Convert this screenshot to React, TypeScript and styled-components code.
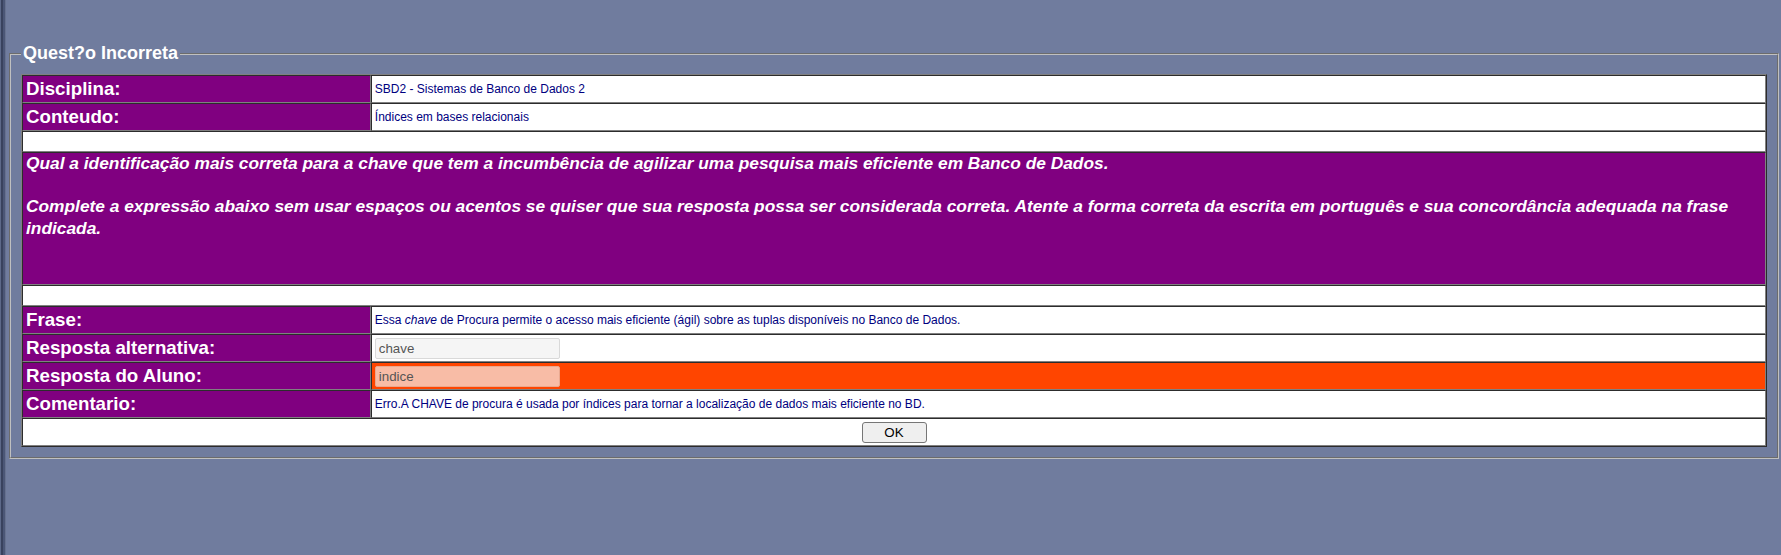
import React from "react";
import styled, { createGlobalStyle } from "styled-components";

const GlobalStyle = createGlobalStyle`
  html, body {
    margin: 0;
    padding: 0;
    background: #707c9e;
  }
  body {
    font-family: "Liberation Sans", Arial, sans-serif;
  }
`;

const Page = styled.div`
  display: flex;
  min-height: 555px;
  background: #707c9e;
`;

const FrameEdge = styled.div`
  flex: 0 0 6px;
  background: linear-gradient(
    to right,
    #5d6989 0 1px,
    #39425e 1px 3px,
    #4b5676 3px 5px,
    #66718f 5px 6px
  );
`;

const Main = styled.main`
  flex: 1;
  min-width: 0;
  padding: 43px 2px 0 3px;
`;

const Fieldset = styled.fieldset`
  margin: 0;
  padding: 10px 10px 10px 10px;
  border: 2px groove #c0c0c0;
  min-width: 0;
`;

const Legend = styled.legend`
  padding: 0 2px;
  color: #ffffff;
  font-family: "Liberation Sans", Arial, sans-serif;
  font-weight: bold;
  font-size: 18px;
`;

const Table = styled.table`
  width: 100%;
  border-collapse: separate;
  border-spacing: 0;
  border: 1px outset #808080;
  background: #ffffff;
`;

const Cell = styled.td`
  box-sizing: border-box;
  border: 1px inset #808080;
  padding: 0 3px;
  vertical-align: middle;
  height: 28px;
`;

const LabelCell = styled(Cell)`
  width: 20%;
  background: #800080;
  color: #ffffff;
  font-weight: bold;
  font-size: 18.72px;
  text-align: left;
`;

const ValueCell = styled(Cell)<{ $tone?: "error" }>`
  background: ${(p) => (p.$tone === "error" ? "#ff4500" : "#ffffff")};
  color: #000080;
  font-size: 12px;
`;

const SpacerCell = styled(Cell)`
  height: 21px;
  background: #ffffff;
`;

const QuestionCell = styled(Cell)`
  height: 133px;
  padding: 0 3px;
  vertical-align: top;
  background: #800080;
  color: #ffffff;
  font-weight: bold;
  font-style: italic;
  font-size: 17.33px;
  line-height: 21.5px;
`;

const ButtonCell = styled(Cell)`
  text-align: center;
  background: #ffffff;
`;

const AnswerInput = styled.input<{ $variant?: "error" }>`
  box-sizing: border-box;
  display: block;
  width: 185px;
  height: 21px;
  margin: 0;
  padding: 0 3px;
  border: 1px solid ${(p) => (p.$variant === "error" ? "#e9a88f" : "#d9d9d9")};
  border-radius: 2px;
  background: ${(p) => (p.$variant === "error" ? "#f8bca6" : "#f5f5f5")};
  color: #555555;
  font-family: "Liberation Sans", Arial, sans-serif;
  font-size: 13.33px;
  outline: none;
`;

const OkButton = styled.button`
  box-sizing: border-box;
  width: 65px;
  height: 21px;
  padding: 0;
  border: 1px solid #767676;
  border-radius: 3px;
  background: #efefef;
  color: #000000;
  font-family: "Liberation Sans", Arial, sans-serif;
  font-size: 13.33px;
  vertical-align: middle;
`;

export default function App() {
  return (
    <>
      <GlobalStyle />
      <Page>
        <FrameEdge />
        <Main>
          <Fieldset>
            <Legend>Quest?o Incorreta</Legend>
            <Table>
              <tbody>
                <tr>
                  <LabelCell as="th">Disciplina:</LabelCell>
                  <ValueCell>SBD2 - Sistemas de Banco de Dados 2</ValueCell>
                </tr>
                <tr>
                  <LabelCell as="th">Conteudo:</LabelCell>
                  <ValueCell>Índices em bases relacionais</ValueCell>
                </tr>
                <tr>
                  <SpacerCell colSpan={2}>&nbsp;</SpacerCell>
                </tr>
                <tr>
                  <QuestionCell colSpan={2}>
                    Qual a identificação mais correta para a chave que tem a
                    incumbência de agilizar uma pesquisa mais eficiente em Banco
                    de Dados.
                    <br />
                    <br />
                    Complete a expressão abaixo sem usar espaços ou acentos se
                    quiser que sua resposta possa ser considerada correta. Atente
                    a forma correta da escrita em português e sua concordância
                    adequada na frase indicada.
                  </QuestionCell>
                </tr>
                <tr>
                  <SpacerCell colSpan={2}>&nbsp;</SpacerCell>
                </tr>
                <tr>
                  <LabelCell as="th">Frase:</LabelCell>
                  <ValueCell>
                    Essa <i>chave</i> de Procura permite o acesso mais eficiente
                    (ágil) sobre as tuplas disponíveis no Banco de Dados.
                  </ValueCell>
                </tr>
                <tr>
                  <LabelCell as="th">Resposta alternativa:</LabelCell>
                  <ValueCell>
                    <AnswerInput type="text" defaultValue="chave" readOnly />
                  </ValueCell>
                </tr>
                <tr>
                  <LabelCell as="th">Resposta do Aluno:</LabelCell>
                  <ValueCell $tone="error">
                    <AnswerInput
                      type="text"
                      defaultValue="indice"
                      readOnly
                      $variant="error"
                    />
                  </ValueCell>
                </tr>
                <tr>
                  <LabelCell as="th">Comentario:</LabelCell>
                  <ValueCell>
                    Erro.A CHAVE de procura é usada por índices para tornar a
                    localização de dados mais eficiente no BD.
                  </ValueCell>
                </tr>
                <tr>
                  <ButtonCell colSpan={2}>
                    <OkButton type="button">OK</OkButton>
                  </ButtonCell>
                </tr>
              </tbody>
            </Table>
          </Fieldset>
        </Main>
      </Page>
    </>
  );
}
